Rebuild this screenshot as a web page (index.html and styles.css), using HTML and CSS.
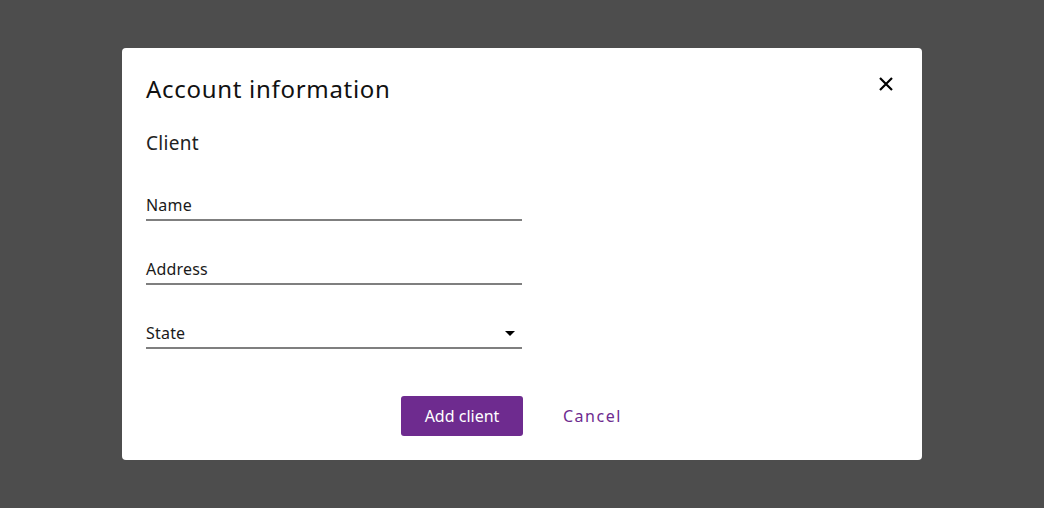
FILE: index.html
```html
<!DOCTYPE html>
<html>
<head>
<meta charset="utf-8">
<link rel="stylesheet" href="styles.css">
</head>
<body>
<div class="overlay">
  <div class="modal">
    <div class="header">
      <h1 class="title">Account information</h1>
      <button class="close" aria-label="Close">
        <svg width="14" height="14" viewBox="0 0 14 14"><path d="M1 1L13 13M13 1L1 13" stroke="#000" stroke-width="2.2"/></svg>
      </button>
    </div>
    <h2 class="section">Client</h2>
    <div class="fields">
      <div class="field"><span class="label">Name</span></div>
      <div class="field"><span class="label">Address</span></div>
      <div class="field select"><span class="label">State</span><span class="caret"></span></div>
    </div>
    <div class="actions">
      <button class="primary">Add client</button>
      <button class="link">Cancel</button>
    </div>
  </div>
</div>
</body>
</html>
```
FILE: styles.css
```css
* { box-sizing: border-box; }
html, body { margin: 0; padding: 0; }
body {
  background: #4d4d4d;
  font-family: "Noto Sans", "Open Sans", sans-serif;
  width: 1044px;
  height: 508px;
  overflow: hidden;
}
.overlay {
  display: flex;
  justify-content: center;
  padding-top: 48px;
}
.modal {
  width: 800px;
  height: 412px;
  background: #fff;
  border-radius: 4px;
  padding: 23px 24px 24px 24px;
  display: flex;
  flex-direction: column;
}
.header {
  display: flex;
  justify-content: space-between;
  align-items: flex-start;
}
.title {
  margin: 0;
  font-size: 24px;
  font-weight: 400;
  line-height: 36px;
  color: #111;
  letter-spacing: 0.7px;
}
.close {
  border: 0;
  background: none;
  padding: 0;
  margin: 6px 5px 0 0;
  width: 14px;
  height: 14px;
  display: flex;
}
.section {
  margin: 22px 0 0 0;
  font-size: 19px;
  font-weight: 400;
  line-height: 28px;
  color: #222;
  letter-spacing: 0.3px;
}
.fields {
  margin-top: 24px;
  display: flex;
  flex-direction: column;
  gap: 24px;
  width: 376px;
}
.field {
  height: 40px;
  border-bottom: 2px solid #7f7f7f;
  display: flex;
  align-items: flex-end;
  justify-content: space-between;
  padding-bottom: 3px;
}
.label {
  font-size: 16px;
  line-height: 22px;
  color: #1a1a1a;
  letter-spacing: 0.2px;
}
.caret {
  width: 0;
  height: 0;
  border-left: 5px solid transparent;
  border-right: 5px solid transparent;
  border-top: 5px solid #000;
  margin: 0 7px 8px 0;
}
.actions {
  margin-top: 47px;
  display: flex;
  align-items: center;
  padding-left: 255px;
  gap: 40px;
}
.primary {
  width: 122px;
  height: 40px;
  background: #6e2b8f;
  color: #fff;
  border: 0;
  border-radius: 3px;
  font-family: inherit;
  font-size: 16px;
}
.link {
  border: 0;
  background: none;
  color: #6e2b8f;
  font-family: inherit;
  font-size: 16px;
  letter-spacing: 1.5px;
  padding: 0;
}
```
